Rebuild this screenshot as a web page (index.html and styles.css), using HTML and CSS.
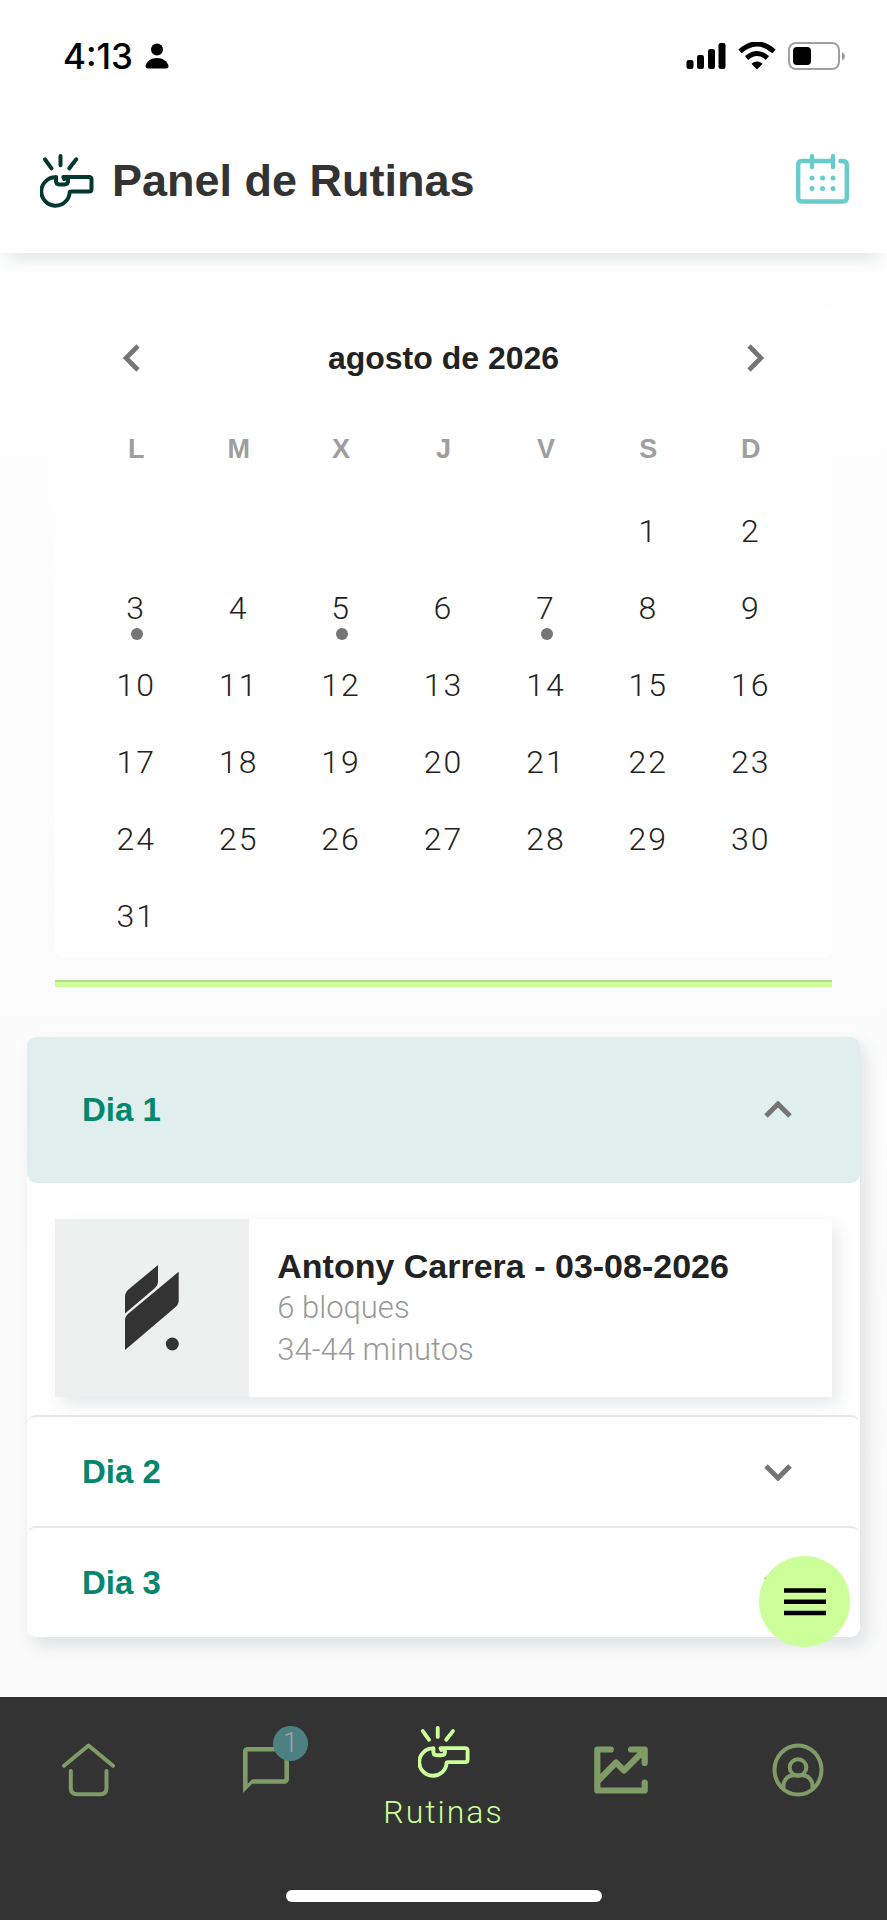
FILE: index.html
```html
<!DOCTYPE html>
<html lang="es">
<head>
  <meta charset="UTF-8" />
  <meta name="viewport" content="width=device-width, initial-scale=1.0" />
  <title>Panel de Rutinas</title>
  <link rel="stylesheet" href="styles.css">
</head>
<body>
  <svg class="sprite" aria-hidden="true">
    <symbol id="whistle" viewBox="0 0 54 54">
      <g fill="none" stroke="currentColor" stroke-width="4" stroke-linecap="round" stroke-linejoin="round">
        <path d="M5 5.3l6.5 9M20.5 2v9.3M36.3 5.3l-7 9" />
        <path d="M16 23.3A14.2 14.2 0 1 0 29.7 38Q29.8 37.5 31 37.5H49Q51.5 37.5 51.5 35V25.5Q51.5 23 49 23H23.3L24.3 25" />
        <path d="M16 23.3V27Q16 30.4 19.4 30.4H24.6Q28 30.4 28 27V24" />
      </g>
    </symbol>
    <symbol id="down" viewBox="0 0 28 18">
      <path d="M2 3l12 12L26 3" fill="none" stroke="currentColor" stroke-width="5" />
    </symbol>
  </svg>

  <!-- Barra de estado -->
  <div class="status">
    <div class="status-left">
      <span>4:13</span>
      <svg width="24" height="26" viewBox="0 0 24 26"><circle cx="12" cy="6.5" r="6" /><path d="M3 25.5Q.5 25.5 .5 23C1.5 18 6.5 15 12 15s10.500 3 11.500 8q0 2.500-2.500 2.500z" /></svg>
    </div>
    <div class="status-right">
      <svg width="40" height="28" viewBox="0 0 40 28">
        <rect x="0.5" y="18" width="7" height="9" rx="2.2" /><rect x="11" y="13" width="7" height="14" rx="2.2" />
        <rect x="22" y="7" width="7" height="20" rx="2.2" /><rect x="32.5" y="1" width="7" height="26" rx="2.2" />
      </svg>
      <svg width="38" height="28" viewBox="0 0 38 28">
        <path d="M2 9.3Q19-5.3 36 9.3M8.6 16Q19 7 29.4 16" fill="none" stroke="#000" stroke-width="5" />
        <path d="M19 27.5l-5.6-5.7q5.6-4.6 11.2 0z" />
      </svg>
      <svg width="58" height="28" viewBox="0 0 58 28">
        <rect x="1" y="1" width="50" height="26" rx="7" fill="none" stroke="#a0a0a0" stroke-width="2" />
        <rect x="5" y="5" width="18" height="18" rx="4" /><path d="M54 10q3 1.5 3 4.2T54 18.5z" fill="#a0a0a0" />
      </svg>
    </div>
  </div>

  <header class="topbar">
    <svg class="topbar-icon"><use href="#whistle" /></svg>
    <h1>Panel de Rutinas</h1>
    <button class="calendar-btn" aria-label="Calendario">
      <svg width="53" height="56" viewBox="0 0 53 56">
        <g fill="none" stroke="currentColor" stroke-width="4.4" stroke-linecap="round">
          <path d="M37 8H6Q2.2 8 2.2 12V44.5Q2.2 48.5 6 48.5H47Q50.8 48.5 50.8 44.5V12Q50.800 8 47 8H44.5" />
          <path d="M16 3v11M37 3v11" />
        </g>
        <g fill="currentColor">
          <circle cx="16" cy="25" r="2.5" /><circle cx="26.5" cy="25" r="2.5" /><circle cx="37" cy="25" r="2.5" />
          <circle cx="16" cy="35.6" r="2.5" /><circle cx="26.5" cy="35.6" r="2.5" /><circle cx="37" cy="35.6" r="2.5" />
        </g>
      </svg>
    </button>
  </header>

  <main>
    <!-- Calendario -->
    <section class="calendar">
      <div class="month">
        <button aria-label="Mes anterior"><svg width="18" height="28" viewBox="0 0 18 28"><path d="M16 2L4 14l12 12" fill="none" stroke="currentColor" stroke-width="4.6" /></svg></button>
        <h2>agosto de 2026</h2>
        <button aria-label="Mes siguiente"><svg width="18" height="28" viewBox="0 0 18 28"><path d="M2 2l12 12L2 26" fill="none" stroke="currentColor" stroke-width="4.6" /></svg></button>
      </div>
      <table class="days">
        <thead>
          <tr><th>L</th><th>M</th><th>X</th><th>J</th><th>V</th><th>S</th><th>D</th></tr>
        </thead>
        <tbody>
          <tr><td></td><td></td><td></td><td></td><td></td><td>1</td><td>2</td></tr>
          <tr><td class="event">3</td><td>4</td><td class="event">5</td><td>6</td><td class="event">7</td><td>8</td><td>9</td></tr>
          <tr><td>10</td><td>11</td><td>12</td><td>13</td><td>14</td><td>15</td><td>16</td></tr>
          <tr><td>17</td><td>18</td><td>19</td><td>20</td><td>21</td><td>22</td><td>23</td></tr>
          <tr><td>24</td><td>25</td><td>26</td><td>27</td><td>28</td><td>29</td><td>30</td></tr>
          <tr><td>31</td><td></td><td></td><td></td><td></td><td></td><td></td></tr>
        </tbody>
      </table>
    </section>

    <hr class="divider" />

    <!-- Rutinas por dia -->
    <section class="accordion">
      <div class="day open">
        <button class="day-header" aria-expanded="true">Dia 1 <svg class="chevron"><use href="#down" /></svg></button>
        <div class="day-body">
          <a href="#" class="routine">
            <div class="routine-logo">
              <svg width="54" height="86" viewBox="0 0 54 86" fill="#333">
                <path d="M33 0V17Q33 20.5 30 23L0 48.5V32Q0 27.5 3.5 24.5z" />
                <path d="M53.7 6.7V35.5Q53.7 39.5 50 42.5L0 85V55Q0 51.5 3.5 48.5z" />
                <circle cx="47.3" cy="79" r="6.5" />
              </svg>
            </div>
            <div class="routine-info">
              <h3>Antony Carrera - 03-08-2026</h3>
              <p>6 bloques</p>
              <p>34-44 minutos</p>
            </div>
          </a>
        </div>
      </div>
      <div class="day">
        <button class="day-header" aria-expanded="false">Dia 2 <svg class="chevron"><use href="#down" /></svg></button>
      </div>
      <div class="day">
        <button class="day-header" aria-expanded="false">Dia 3 <svg class="chevron"><use href="#down" /></svg></button>
      </div>
    </section>
  </main>

  <button class="fab" aria-label="Menu">
    <svg width="42" height="28" viewBox="0 0 42 28"><path d="M0 2.5h42M0 13.7h42M0 25h42" stroke="#000" stroke-width="4.6" /></svg>
  </button>

  <footer class="bottom">
    <nav class="tabs">
      <a href="#" aria-label="Inicio">
        <svg width="53" height="54" viewBox="0 0 53 54" fill="none" stroke="currentColor" stroke-width="4" stroke-linecap="round" stroke-linejoin="round">
          <path d="M2 22.8L26.5 2.5 51 22.8M8.8 28V45Q8.8 51.3 15 51.3H38.3Q44.5 51.3 44.5 45V28" />
        </svg>
      </a>
      <a href="#" aria-label="Mensajes">
        <span class="chat">
          <svg width="46" height="46" viewBox="2 2 20 20"><path fill="currentColor" d="M20 2H4c-1.1 0-2 .9-2 2v18l4-4h14c1.1 0 2-.9 2-2V4c0-1.1-.9-2-2-2zm0 14H6l-2 2V4h16v12z" /></svg>
          <span class="badge">1</span>
        </span>
      </a>
      <a href="#" class="current">
        <svg class="tab-whistle"><use href="#whistle" /></svg>
        <span>Rutinas</span>
      </a>
      <a href="#" aria-label="Progreso">
        <svg width="54" height="48" viewBox="0 0 54 48" fill="none" stroke="currentColor" stroke-width="6.2" stroke-linecap="round" stroke-linejoin="round">
          <path d="M16.8 3.5H3.3V44.5H50.7V36.5M37 3.5H50.7V17M3.5 35.5L22 16.5 30 24.5 50.5 4" />
        </svg>
      </a>
      <a href="#" aria-label="Perfil">
        <svg width="52" height="54" viewBox="0 0 52 54" fill="none" stroke="currentColor" stroke-width="4">
          <ellipse cx="26" cy="27" rx="23.5" ry="24.5" /><circle cx="26" cy="24.5" r="8.3" />
          <path d="M11.5 45V43C11.5 36.5 16 32.5 21.5 32.3H30.5C36 32.5 40.5 36.5 40.5 43V45" />
        </svg>
      </a>
    </nav>
    <div class="home-bar"></div>
  </footer>
</body>
</html>
```

FILE: styles.css
```css
* {
  box-sizing: border-box;
}
body {
  font-family: "Liberation Sans", Arial, sans-serif;
  margin: 0;
  min-height: 100vh;
  display: flex;
  flex-direction: column;
  background: linear-gradient(#fff, #f9f9f9);
  color: #222;
}
h1, h2, h3, p {
  margin: 0;
}
button {
  font: inherit;
  color: inherit;
  border: 0;
  background: none;
  padding: 0;
  cursor: pointer;
}
svg {
  display: block;
  flex: none;
}
a {
  color: inherit;
  text-decoration: none;
}
.sprite {
  position: absolute;
  width: 0;
  height: 0;
}

/* status bar */
.status {
  display: flex;
  justify-content: space-between;
  align-items: center;
  height: 112px;
  padding: 0 41px 0 63px;
  background: #fff;
  color: #000;
}
.status-left,
.status-right {
  display: flex;
  align-items: center;
  gap: 12px;
}
.status-left {
  font: 500 35px Inter, sans-serif;
}

/* header */
.topbar {
  display: flex;
  align-items: center;
  gap: 18px;
  height: 141px;
  padding: 0 38px 4px 40px;
  background: #fff;
  box-shadow: 0 14px 16px -8px rgba(10, 60, 55, 0.12);
}
.topbar-icon {
  width: 54px;
  height: 54px;
  color: #03372f;
}
.topbar h1 {
  flex: 1;
  font-size: 45px;
  color: #333;
}
.calendar-btn {
  color: #68cccb;
}

main {
  flex: 1;
  padding: 54px 27px 59px;
}

/* calendar */
.calendar {
  margin: 0 28px;
  padding: 12px 30px 4px;
  background: #fff;
  border-radius: 9px;
}
.month {
  display: flex;
  justify-content: space-between;
  align-items: center;
  height: 78px;
  padding: 0 37px;
  color: #757575;
}
.month h2 {
  font-size: 32px;
  color: #222;
}
.days {
  width: 100%;
  table-layout: fixed;
  border-collapse: collapse;
  text-align: center;
}
.days th {
  height: 95px;
  padding: 10px 0 0;
  font-size: 27px;
  color: #9e9e9e;
}
.days td {
  position: relative;
  height: 77px;
  padding: 0;
  font: 300 32px Roboto, sans-serif;
  letter-spacing: 2px;
}
.event::after {
  content: "";
  position: absolute;
  left: calc(50% - 5px);
  bottom: 6px;
  width: 12px;
  height: 12px;
  border-radius: 50%;
  background: #757575;
}
.divider {
  height: 7px;
  margin: 22px 28px 50px;
  border: 0;
  border-top: 2px solid #b8dc8e;
  background: #cf9;
}

/* accordion */
.accordion {
  background: #fff;
  border-radius: 9px;
  box-shadow: 6px 8px 18px rgba(10, 60, 55, 0.12);
}
.day + .day {
  border-top: 2px solid #e8e8e8;
  border-radius: 9px;
}
.day-header {
  display: flex;
  justify-content: space-between;
  align-items: center;
  width: 100%;
  height: 109px;
  padding: 0 68px 0 55px;
  font-size: 33px;
  font-weight: bold;
  color: #05866f;
}
.open .day-header {
  height: 146px;
  background: #e0efed;
  border-radius: 9px;
}
.chevron {
  width: 28px;
  height: 18px;
  color: #757575;
}
.open .chevron {
  transform: rotate(180deg);
}
.day-body {
  padding: 36px 28px 18px;
}
.routine {
  display: flex;
  box-shadow: 6px 8px 16px rgba(10, 60, 55, 0.1);
}
.routine-logo {
  display: flex;
  align-items: center;
  justify-content: center;
  flex: 0 0 25%;
  background: #ecf0ef;
}
.routine-info {
  flex: 1;
  padding: 26px 28px;
  background: #fff;
}
.routine-info h3 {
  font-size: 34px;
  line-height: 42px;
}
.routine-info p {
  font: 300 31px/42px Roboto, sans-serif;
  color: #999;
}

.fab {
  position: fixed;
  z-index: 1;
  right: 37px;
  bottom: 273px;
  width: 91px;
  height: 91px;
  display: flex;
  align-items: center;
  justify-content: center;
  border-radius: 50%;
  background: #cf9;
}

/* bottom tabs */
.bottom {
  position: sticky;
  bottom: 0;
  height: 223px;
  display: flex;
  flex-direction: column;
  justify-content: space-between;
  align-items: center;
  padding-bottom: 18px;
  background: #333;
}
.tabs {
  display: flex;
  width: 100%;
  height: 146px;
}
.tabs a {
  flex: 1;
  display: flex;
  flex-direction: column;
  align-items: center;
  justify-content: center;
  gap: 14px;
  color: #7f9c66;
}
.tabs .current {
  padding-top: 18px;
  font: 300 32px/40px Roboto, sans-serif;
  letter-spacing: 2px;
  color: #cf9;
}
.tab-whistle {
  width: 52px;
  height: 52px;
}
.chat {
  position: relative;
}
.badge {
  position: absolute;
  top: -21px;
  right: -19px;
  width: 35px;
  height: 35px;
  border-radius: 50%;
  background: #4d8080;
  color: #a3a3a3;
  font: 300 27px/35px Roboto, sans-serif;
  text-align: center;
}
.home-bar {
  width: 316px;
  height: 12px;
  border-radius: 6px;
  background: #fff;
}
```
